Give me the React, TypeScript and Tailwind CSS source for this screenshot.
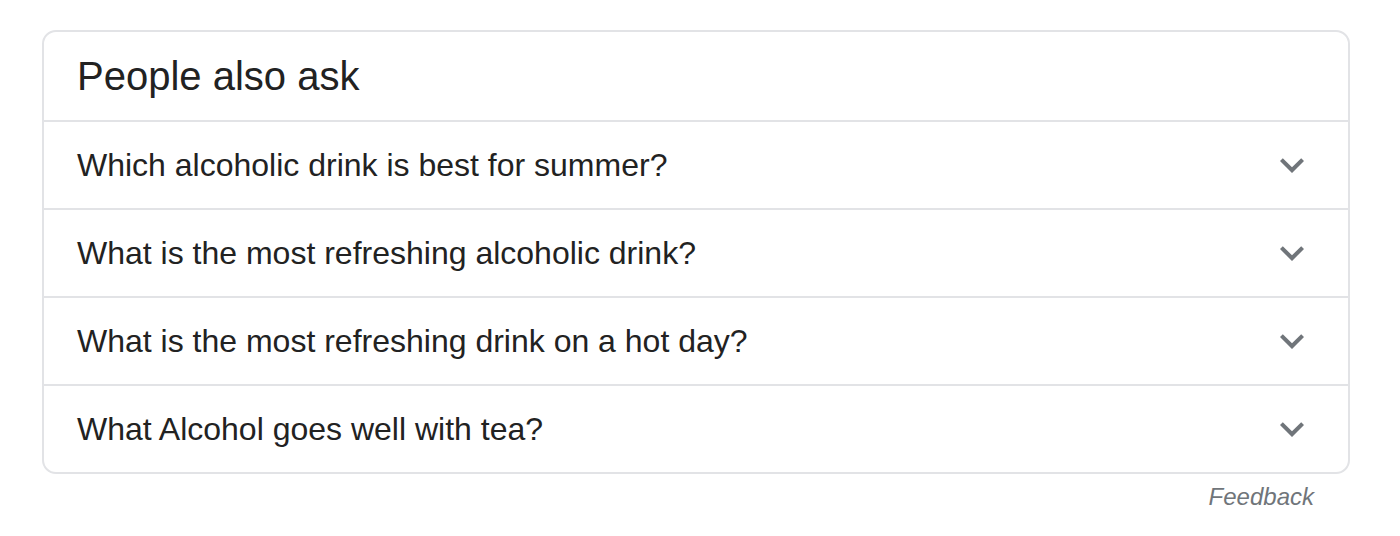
import React from "react";

const questions = [
  "Which alcoholic drink is best for summer?",
  "What is the most refreshing alcoholic drink?",
  "What is the most refreshing drink on a hot day?",
  "What Alcohol goes well with tea?",
];

const Chevron = () => (
  <svg width="48" height="48" viewBox="0 0 24 24" fill="#70757a">
    <path d="M16.59 8.59L12 13.17 7.41 8.59 6 10l6 6 6-6z" />
  </svg>
);

const App: React.FunctionComponent = () => {
  return (
    <div
      className="min-h-screen bg-white pl-[42px] pt-[30px]"
      style={{ fontFamily: '"Liberation Sans", Arial, sans-serif' }}
    >
      <div className="w-[1308px]">
        <div className="rounded-[14px] border-2 border-[#e2e3e6] text-[#222]">
          <div className="flex h-[88px] items-center px-[33px] text-[40px]">
            People also ask
          </div>
          {questions.map((q) => (
            <div
              key={q}
              className="flex h-[88px] items-center justify-between border-t-2 border-[#e2e3e6] pl-[33px] pr-[32px]"
            >
              <span className="text-[32px]">{q}</span>
              <Chevron />
            </div>
          ))}
        </div>
        <div className="mt-[9px] pr-[36px] text-right text-[24px] leading-[28px] italic text-[#70757a]">
          Feedback
        </div>
      </div>
    </div>
  );
};

export default App;
